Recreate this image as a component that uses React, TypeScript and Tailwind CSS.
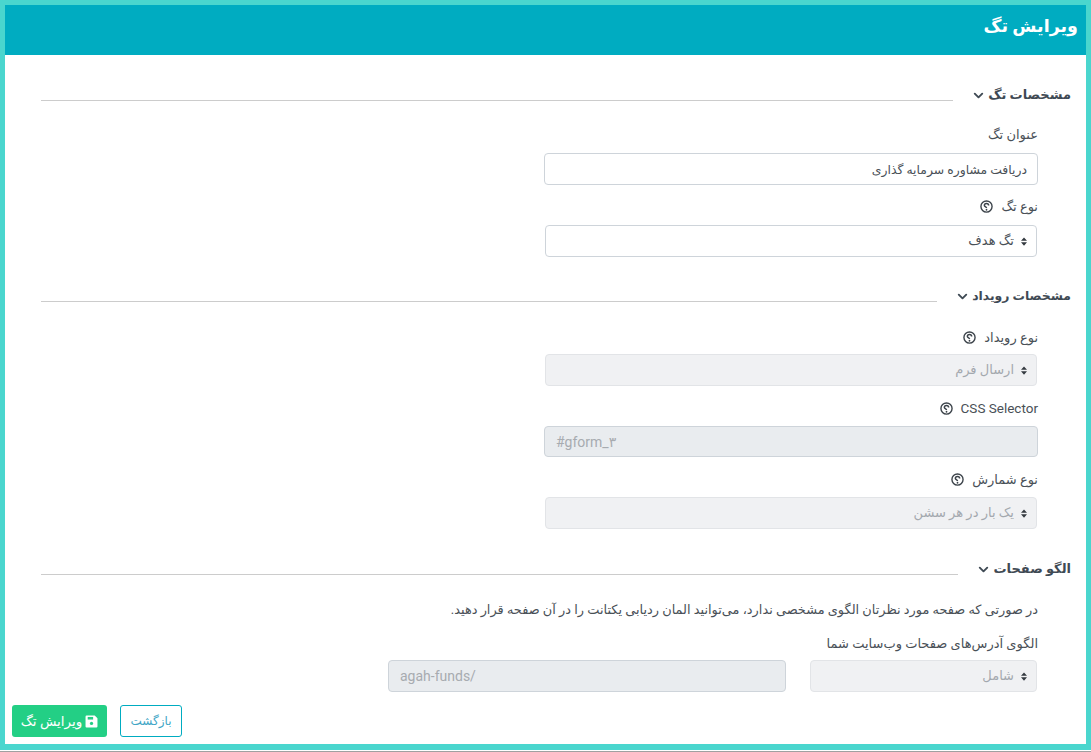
import React from 'react';
import { ChevronDown } from 'lucide-react';

const HelpIcon = () => (
    <svg viewBox="0 0 14 14" className="w-[13px] h-[13px] shrink-0" fill="none" stroke="#3d444b">
        <circle cx="7" cy="7" r="6" strokeWidth="1.5" />
        <path d="M9.3 5.9c0-1.3-1-2.1-2.3-2.1s-2.3.8-2.3 2c0 1.3 2.3 1.2 2.3 2.7" strokeWidth="1.6" />
        <circle cx="7" cy="10.5" r="0.95" fill="#3d444b" stroke="none" />
    </svg>
);

const SelectArrows = () => (
    <svg viewBox="0 0 8 12" className="w-[6px] h-[9px] shrink-0" fill="#343a40">
        <path d="M4 0.5l4 4.5H0zM4 11.5L0 7h8z" />
    </svg>
);

const SectionTitle = ({ title, className }: { title: string; className?: string }) => (
    <div className="flex items-center gap-[18px]">
        <div className={`flex items-center gap-[2px] font-bold text-[#3f4a54] whitespace-nowrap h-[20px] ${className ?? 'text-[13px]'}`}>
            <span>{title}</span>
            <ChevronDown className="w-[15px] h-[15px]" strokeWidth={3} />
        </div>
        <div className="h-px bg-[#ccc] mt-[10px] flex-1"></div>
    </div>
);

const Label = ({ text, help, className }: { text: string; help?: boolean; className?: string }) => (
    <div className={`flex items-center gap-[8px] h-[20px] text-[#495057] ${className ?? 'text-[13px] pt-px'}`}>
        <span>{text}</span>
        {help && <HelpIcon />}
    </div>
);

const SelectBox = ({ value, disabled, className }: { value: string; disabled?: boolean; className?: string }) => (
    <div className={`h-[32px] border rounded-[4px] flex items-center gap-[7px] pr-[9px] mr-[1px] text-[13px] ${disabled ? 'bg-[#f0f1f3] border-[#e2e4e7] text-[#a3a8ae]' : 'bg-white border-[#ced4da] text-[#495057]'} ${className ?? ''}`}>
        <SelectArrows />
        <span>{value}</span>
    </div>
);

export default function App() {
    return (
        <div dir="rtl" className="w-[1091px] h-[752px] bg-white font-['Roboto','DejaVu_Sans',sans-serif] overflow-hidden">
            <div className="h-[750px] bg-[#4ad6ce] p-[5px] pb-[6px]">
                <div className="h-full bg-white flex flex-col">
                    <header className="h-[50px] bg-[#00acc1] flex items-center pr-[8px] pb-[8px] text-white text-[17.5px] font-bold shrink-0">
                        ویرایش تگ
                    </header>

                    <div className="flex-1 pr-[15px] pl-[36px] pt-[30px] flex flex-col">
                        <SectionTitle title="مشخصات تگ" />
                        <div className="pr-[33px] mt-[19px] flex flex-col">
                            <Label text="عنوان تگ" />
                            <input
                                readOnly
                                value="دریافت مشاوره سرمایه گذاری"
                                className="mt-[9px] w-[494px] h-[32px] border border-[#ced4da] rounded-[4px] px-[10px] text-[12.4px] text-[#495057] outline-none"
                            />
                            <div className="mt-[11px]"><Label text="نوع تگ" help /></div>
                            <SelectBox value="تگ هدف" className="mt-[9px] w-[492px]" />
                        </div>

                        <div className="mt-[29px]">
                            <SectionTitle title="مشخصات رویداد" className="text-[12.4px] pt-px" />
                        </div>
                        <div className="pr-[33px] mt-[21px] flex flex-col">
                            <Label text="نوع رویداد" help />
                            <SelectBox value="ارسال فرم" disabled className="mt-[7px] w-[492px]" />
                            <div className="mt-[12px]"><Label text="CSS Selector" help className="text-[13.5px]" /></div>
                            <input
                                readOnly
                                value="#gform_۳"
                                dir="ltr"
                                className="mt-[8px] w-[494px] h-[31px] bg-[#e9ecef] border border-[#ced4da] rounded-[4px] px-[11px] text-[14px] text-[#a7abb0] outline-none"
                            />
                            <div className="mt-[12px]"><Label text="نوع شمارش" help /></div>
                            <SelectBox value="یک بار در هر سشن" disabled className="mt-[8px] w-[492px]" />
                        </div>

                        <div className="mt-[30px]">
                            <SectionTitle title="الگو صفحات" />
                        </div>
                        <div className="pr-[33px] mt-[21px] flex flex-col">
                            <p className="text-[12.9px] text-[#495057] h-[20px]">
                                در صورتی که صفحه مورد نظرتان الگوی مشخصی ندارد، می‌توانید المان ردیابی یکتانت را در آن صفحه قرار دهید.
                            </p>
                            <div className="mt-[13px]"><Label text="الگوی آدرس‌های صفحات وب‌سایت شما" /></div>
                            <div className="mt-[7px] flex gap-[24px]">
                                <SelectBox value="شامل" disabled className="w-[227px]" />
                                <input
                                    readOnly
                                    value="agah-funds/"
                                    dir="ltr"
                                    className="w-[398px] h-[32px] bg-[#e9ecef] border border-[#ced4da] rounded-[4px] px-[11px] text-[14px] text-[#a7abb0] outline-none"
                                />
                            </div>
                        </div>

                        <div className="mt-auto mb-[7px] -ml-[29px] flex justify-end gap-[13px]">
                            <button className="w-[62px] h-[32px] border border-[#00acc1] rounded-[3px] text-[#3fa6c6] text-[12px] bg-white">بازگشت</button>
                            <button className="w-[95px] h-[32px] bg-[#23cf85] rounded-[3px] text-white text-[13.5px] font-medium flex items-center justify-center gap-[3px]">
                                <svg viewBox="0 0 12 12" className="w-[13px] h-[13px]" fill="#fff">
                                    <path d="M1.5 0.5h7.5l2.5 2.5v7.5a1 1 0 0 1-1 1h-9a1 1 0 0 1-1-1v-9a1 1 0 0 1 1-1z" />
                                    <rect x="2.5" y="1.8" width="5" height="2.4" fill="#23cf85" />
                                    <circle cx="6" cy="7.8" r="1.5" fill="#23cf85" />
                                </svg>
                                <span>ویرایش تگ</span>
                            </button>
                        </div>
                    </div>
                </div>
            </div>
            <div className="h-px mt-px bg-[#a0a0a0]"></div>
        </div>
    );
}
